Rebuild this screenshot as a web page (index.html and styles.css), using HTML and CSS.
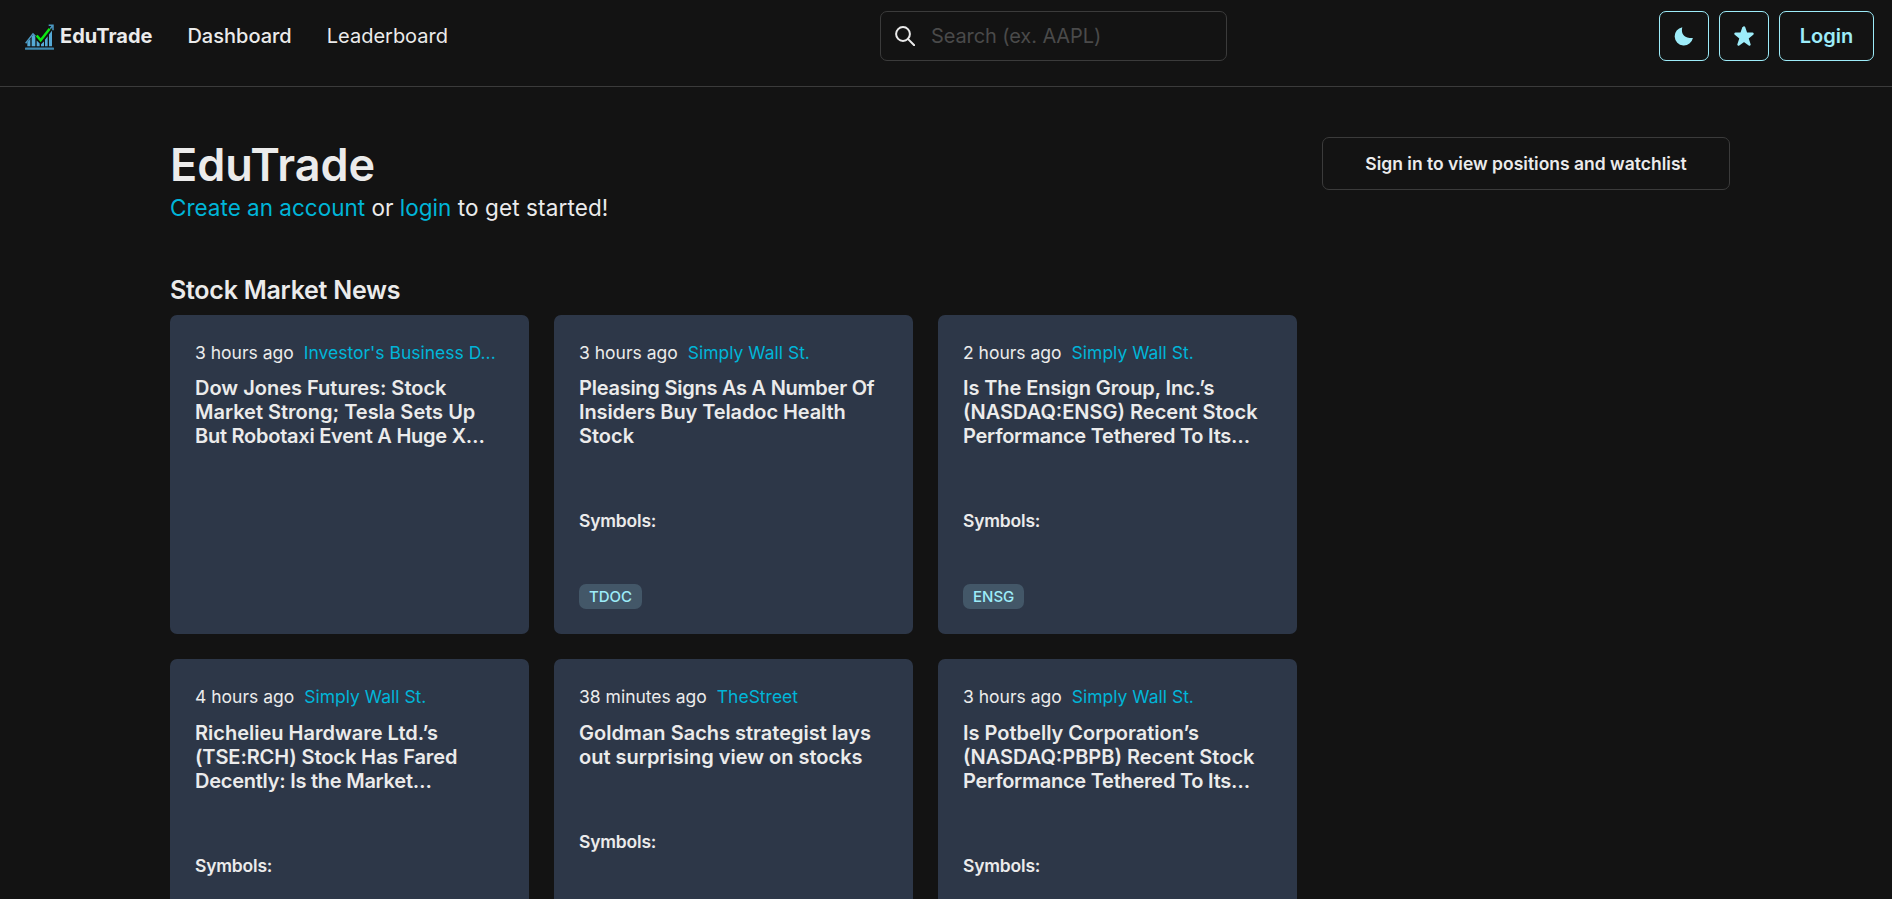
FILE: index.html
```
<!DOCTYPE html>
<html lang="en">
<head>
<meta charset="utf-8">
<title>EduTrade</title>
<link rel="stylesheet" href="styles.css">
</head>
<body>
<header class="navbar">
  <nav class="nav-left">
    <a class="brand" href="#">
      <svg class="logo" viewBox="15 16.5 87 87" aria-hidden="true">
        <rect x="15" y="93" width="87" height="7" rx="2" fill="#3f88af"/>
        <path fill="#55a9d6" d="M22 89V77l9-10v22zM35 89V60l6-6 5 7v28zM50 89V72l9 9v8zM63 89v-6l9-8v14zM75 89V70l8-11v30zM87 89V54l9-12v47z"/>
        <path d="M17 80l22-28 8 8M86 26h13v15M98 27l-9 12" fill="none" stroke="#4b97c0" stroke-width="4.500"/>
        <path d="M50 56l12 16 28-36" fill="none" stroke="#131313" stroke-width="12"/>
        <path d="M50 57l12 14 27-34" fill="none" stroke="#0be813" stroke-width="7.500"/>
      </svg>
      <span class="brand-name">EduTrade</span>
    </a>
    <a class="nav-link nav-link-current" href="#">Dashboard</a>
    <a class="nav-link" href="#">Leaderboard</a>
  </nav>
  <label class="search">
    <svg class="search-icon" viewBox="0 0 20 20" aria-hidden="true"><circle cx="8" cy="8" r="6.900"/><path d="M12.900 12.900l6.300 6.300"/></svg>
    <input class="search-input" type="text" placeholder="Search (ex. AAPL)">
  </label>
  <div class="nav-right">
    <button class="btn btn-icon" aria-label="Toggle theme">
      <svg class="icon" viewBox="0 0 20 20"><path d="M8.300 1.200C7 6.400 8.600 12.300 18.900 12.100A9.200 9.200 0 1 1 8.300 1.200z"/></svg>
    </button>
    <button class="btn btn-icon" aria-label="Watchlist">
      <svg class="icon" viewBox="0 0 24 24"><path d="M23.555 8.729a1.505 1.505 0 0 0-1.406-.98h-6.087a.5.5 0 0 1-.472-.334l-2.185-6.193a1.5 1.500 0 0 0-2.810 0l-.5.016-2.180 6.177a.5.500 0 0 1-.471.334H1.850A1.500 1.500 0 0 0 .887 10.400l5.184 4.300a.5.500 0 0 1 .155.543l-2.178 6.531a1.500 1.500 0 0 0 2.310 1.684l5.346-3.920a.5.500 0 0 1 .591 0l5.344 3.919a1.500 1.500 0 0 0 2.312-1.683l-2.178-6.535a.5.500 0 0 1 .155-.543l5.194-4.306a1.500 1.500 0 0 0 .433-1.661z"/></svg>
    </button>
    <button class="btn btn-login">Login</button>
  </div>
</header>
<main class="page">
  <section class="main-col">
    <h1 class="title">EduTrade</h1>
    <p class="subtitle"><a class="link" href="#">Create an account</a> or <a class="link" href="#">login</a><span class="loose"> to get started!</span></p>
    <h2 class="section-title">Stock Market News</h2>
    <div class="news-grid">
      <article class="card">
        <div class="meta"><span class="time">3 hours ago</span><a class="link source" href="#">Investor's Business D...</a></div>
        <h3 class="headline">Dow Jones Futures: Stock<br>Market Strong; Tesla Sets Up<br><span class="tight">But Robotaxi Event A Huge X…</span></h3>
      </article>
      <article class="card">
        <div class="meta"><span class="time">3 hours ago</span><a class="link source" href="#">Simply Wall St.</a></div>
        <h3 class="headline"><span class="tight">Pleasing Signs As A Number Of</span><br><span class="snug">Insiders Buy Teladoc Health</span><br>Stock</h3>
        <h4 class="symbols">Symbols:</h4>
        <span class="tag">TDOC</span>
      </article>
      <article class="card">
        <div class="meta"><span class="time">2 hours ago</span><a class="link source" href="#">Simply Wall St.</a></div>
        <h3 class="headline"><span class="snug">Is The Ensign Group, Inc.’s</span><br>(NASDAQ:ENSG) Recent Stock<br><span class="tight">Performance Tethered To Its…</span></h3>
        <h4 class="symbols">Symbols:</h4>
        <span class="tag">ENSG</span>
      </article>
      <article class="card">
        <div class="meta"><span class="time">4 hours ago</span><a class="link source" href="#">Simply Wall St.</a></div>
        <h3 class="headline">Richelieu Hardware Ltd.’s<br><span class="snug">(TSE:RCH) Stock Has Fared</span><br><span class="tight">Decently: Is the Market…</span></h3>
        <h4 class="symbols">Symbols:</h4>
      </article>
      <article class="card">
        <div class="meta"><span class="time">38 minutes ago</span><a class="link source" href="#">TheStreet</a></div>
        <h3 class="headline">Goldman Sachs strategist lays<br>out surprising view on stocks</h3>
        <h4 class="symbols">Symbols:</h4>
      </article>
      <article class="card">
        <div class="meta"><span class="time">3 hours ago</span><a class="link source" href="#">Simply Wall St.</a></div>
        <h3 class="headline">Is Potbelly Corporation’s<br>(NASDAQ:PBPB) Recent Stock<br><span class="tight">Performance Tethered To Its…</span></h3>
        <h4 class="symbols">Symbols:</h4>
      </article>
    </div>
  </section>
  <aside class="side-col">
    <div class="signin"><span class="signin-text">Sign in to view positions and watchlist</span></div>
  </aside>
</main>
</body>
</html>
```
FILE: styles.css
```
* { box-sizing: border-box; margin: 0; padding: 0; }
body {
  height: 899px;
  overflow: hidden;
  background: #131313;
  color: #ebebeb;
  font-family: Inter, "Liberation Sans", sans-serif;
  font-size: 20px;
  line-height: 1.5;
}

a { color: inherit; text-decoration: none; }

/* Top bar */
.navbar {
  display: grid;
  grid-template-columns: 855px 347px 1fr;
  align-items: start;
  height: 87px;
  padding: 11px 18px 0 25px;
  border-bottom: 1px solid #3b3b3b;
}
.nav-left { display: flex; align-items: center; height: 50px; gap: 35px; }
.brand { display: flex; align-items: center; gap: 6px; }
.logo { width: 29px; height: 29px; }
.brand-name { font-weight: 700; }
.nav-link-current { font-weight: 500; }
.search {
  display: flex;
  align-items: center;
  height: 50px;
  padding-left: 14px;
  gap: 16px;
  border: 1px solid #3b3b3b;
  border-radius: 7px;
}
.search-icon { width: 20px; height: 20px; fill: none; stroke: #ebebeb; stroke-width: 2; stroke-linecap: round; }
.search-input {
  flex: 1;
  min-width: 0;
  border: 0;
  outline: 0;
  background: none;
  color: #ebebeb;
  font: inherit;
  letter-spacing: -0.1px;
}
.search-input::placeholder { color: #4a4a4a; opacity: 1; }
.nav-right { display: flex; justify-content: flex-end; gap: 10px; }
.btn {
  display: flex;
  align-items: center;
  justify-content: center;
  height: 50px;
  border: 1px solid #9decf9;
  border-radius: 7px;
  background: none;
  color: #9decf9;
  font: inherit;
  font-weight: 600;
}
.btn-icon { width: 50px; }
.btn-login { width: 95px; }
.icon { width: 20px; height: 20px; fill: currentColor; }

/* Page body */
.page {
  display: grid;
  grid-template-columns: 1127px 408px;
  gap: 25px;
  padding: 50px 162px 0 170px;
}
.title { padding-top: 1px; font-size: 45px; line-height: 53px; font-weight: 600; letter-spacing: -0.1px; }
.subtitle { font-size: 22.5px; line-height: 34px; }
.section-title { margin-top: 50px; margin-bottom: 10px; font-size: 25px; line-height: 30px; font-weight: 600; letter-spacing: -0.25px; }
.link { color: #00b5d8; }
.loose { letter-spacing: 0.12px; }
.snug { letter-spacing: -0.1px; }
.tight { letter-spacing: -0.25px; }

.news-grid {
  display: grid;
  grid-template-columns: repeat(3, 359px);
  grid-auto-rows: 319.35px;
  gap: 25px;
}
.card { padding: 25px; border-radius: 7px; background: #2d3748; white-space: nowrap; }
.meta { display: flex; gap: 10px; font-size: 17.5px; line-height: 26.25px; }
.headline { margin-top: 10px; font-size: 20px; line-height: 24px; font-weight: 600; }
.symbols { margin-top: 62px; font-size: 17.5px; line-height: 21px; font-weight: 600; letter-spacing: -0.2px; }
.tag {
  display: inline-block;
  margin-top: 53px;
  padding: 0 10px;
  border-radius: 7px;
  background: #435768;
  color: #9decf9;
  font-size: 15px;
  line-height: 25px;
  font-weight: 500;
}

.signin {
  display: flex;
  align-items: center;
  justify-content: center;
  height: 53px;
  border: 1px solid #3b3b3b;
  border-radius: 7px;
}
.signin-text { padding-top: 1px; font-size: 17.5px; font-weight: 600; }
```
